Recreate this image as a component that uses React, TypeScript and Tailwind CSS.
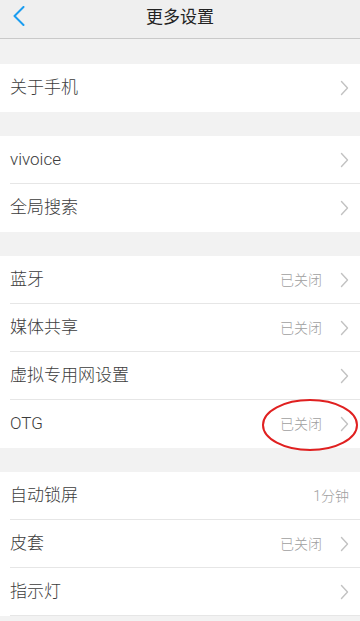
import React from "react";

type Row = { label: string; value?: string; arrow?: boolean };

const groups: Row[][] = [
  [{ label: "关于手机", arrow: true }],
  [
    { label: "vivoice", arrow: true },
    { label: "全局搜索", arrow: true },
  ],
  [
    { label: "蓝牙", value: "已关闭", arrow: true },
    { label: "媒体共享", value: "已关闭", arrow: true },
    { label: "虚拟专用网设置", arrow: true },
    { label: "OTG", value: "已关闭", arrow: true },
  ],
  [
    { label: "自动锁屏", value: "1分钟" },
    { label: "皮套", value: "已关闭", arrow: true },
    { label: "指示灯", arrow: true },
  ],
];

function ChevronRight() {
  return (
    <svg width="9" height="16" viewBox="0 0 9 16" fill="none" stroke="#c2c2c2" strokeWidth="1.4" strokeLinecap="round" strokeLinejoin="round">
      <path d="M1.5 1.5L7.5 8L1.5 14.5" />
    </svg>
  );
}

function BackIcon() {
  return (
    <svg width="12" height="20" viewBox="0 0 12 20" fill="none" stroke="#1a9df0" strokeWidth="2" strokeLinecap="round" strokeLinejoin="round">
      <path d="M10.5 1L1.5 10L10.5 19" />
    </svg>
  );
}

function SettingRow({ row, last }: { row: Row; last: boolean }) {
  return (
    <div className="relative h-12 flex items-center pl-[10px] pr-[11px] bg-white">
      <span className="text-[17px] text-[#3c3c3c] font-light">{row.label}</span>
      <div className="ml-auto flex items-center">
        {row.value && (
          <span className={`text-[14px] text-[#a0a0a0] font-light ${row.arrow ? "mr-[18px]" : ""}`}>{row.value}</span>
        )}
        {row.arrow && <ChevronRight />}
      </div>
      {!last && <div className="absolute left-[10px] right-0 bottom-0 h-px bg-[#e6e6e6]" />}
      {row.label === "OTG" && (
        <svg className="absolute left-[260px] top-[-3px]" width="100" height="56" viewBox="0 0 100 56" fill="none">
          <ellipse cx="50" cy="28" rx="47" ry="25" stroke="#e02020" strokeWidth="2" />
        </svg>
      )}
    </div>
  );
}

export default function App() {
  return (
    <div
      className="w-[360px] h-[621px] overflow-hidden bg-[#f2f2f2]"
      style={{ fontFamily: 'Roboto, "Noto Sans CJK SC", sans-serif' }}
    >
      <div className="h-[39px] bg-[#efefef] border-b border-[#c9c9c9] flex items-center relative">
        <div className="absolute left-[13px] top-[6px]">
          <BackIcon />
        </div>
        <div className="flex-1 text-center text-[17px] text-[#222] -mt-[2px]">更多设置</div>
      </div>
      <div className="flex flex-col gap-6 pt-[25px]">
        {groups.map((g, gi) => (
          <div key={gi} className="bg-white">
            {g.map((r, ri) => (
              <SettingRow key={r.label} row={r} last={ri === g.length - 1 && gi !== groups.length - 1} />
            ))}
          </div>
        ))}
      </div>
    </div>
  );
}
